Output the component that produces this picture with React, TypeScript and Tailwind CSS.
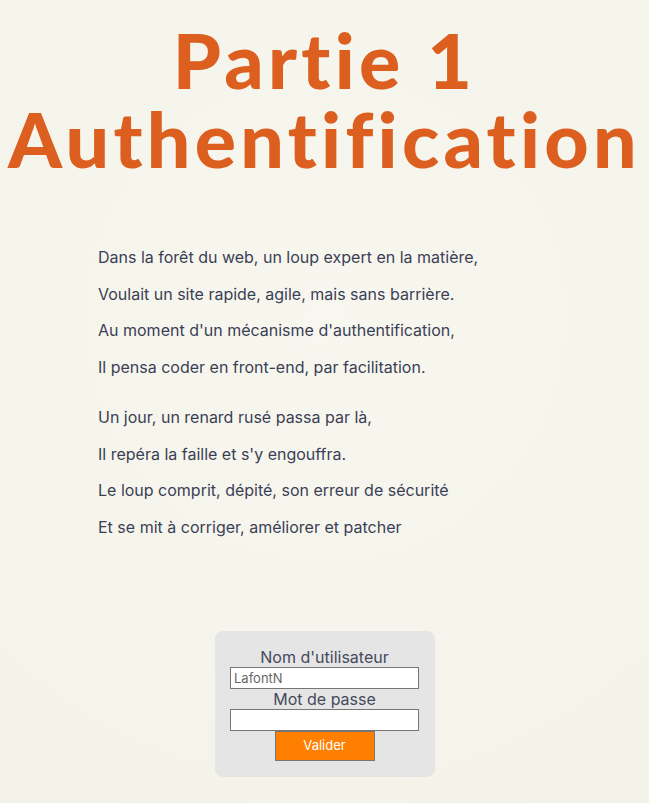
export default function App() {
  const stanzas = [
    [
      "Dans la forêt du web, un loup expert en la matière,",
      "Voulait un site rapide, agile, mais sans barrière.",
      "Au moment d'un mécanisme d'authentification,",
      "Il pensa coder en front-end, par facilitation.",
    ],
    [
      "Un jour, un renard rusé passa par là,",
      "Il repéra la faille et s'y engouffra.",
      "Le loup comprit, dépité, son erreur de sécurité",
      "Et se mit à corriger, améliorer et patcher",
    ],
  ]

  return (
    <div className="min-h-[803px] w-full bg-[radial-gradient(circle_at_50%_40%,#f8f7ef,#f4f3ea)] font-['Inter',sans-serif]">
      {/* Titre */}
      <h1 className="pt-[20px] text-center font-['Lato',sans-serif] text-[77px] font-black leading-[79px] tracking-[4.3px] text-[#dc5f1f] [font-variant-ligatures:none]">
        Partie 1
        <br />
        Authentification
      </h1>

      {/* Poème */}
      <div className="mt-[61px] pl-[98px] text-[16px] text-[#3b3f55]">
        {stanzas.map((lines, i) => (
          <div key={i} className={i > 0 ? "mt-[14px]" : ""}>
            {lines.map((line) => (
              <p key={line} className="leading-[36.5px]">
                {line}
              </p>
            ))}
          </div>
        ))}
      </div>

      {/* Formulaire */}
      <div className="mt-[86px] flex justify-center">
        <form className="flex w-[220px] flex-col items-center rounded-lg bg-[#e5e5e5] pt-[16px] pb-[16px] text-[16px] text-[#444a5c]">
          <label className="leading-[20px]">Nom d'utilisateur</label>
          <input
            className="h-[22px] w-[189px] border border-[#767676] bg-white px-[3px] text-[13px] text-[#666]"
            defaultValue="LafontN"
          />
          <label className="leading-[20px]">Mot de passe</label>
          <input type="password" className="h-[22px] w-[189px] border border-[#767676] bg-white" />
          <button
            type="button"
            className="h-[30px] w-[100px] border border-[#767676] bg-[#ff7f00] text-[13px] text-white"
          >
            Valider
          </button>
        </form>
      </div>
    </div>
  )
}
